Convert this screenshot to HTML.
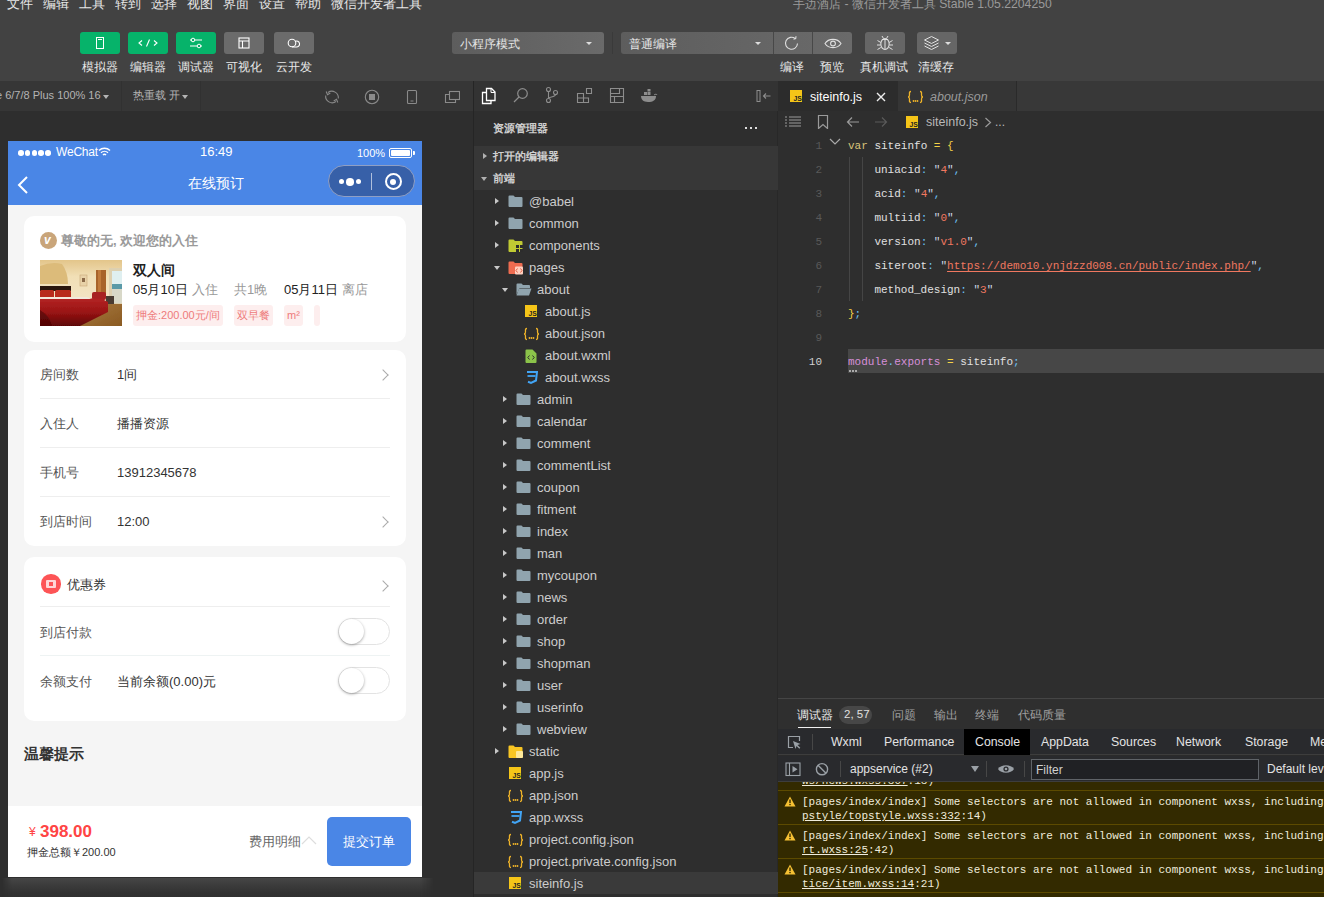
<!DOCTYPE html>
<html><head><meta charset="utf-8">
<style>
*{margin:0;padding:0;box-sizing:border-box}
html,body{width:1324px;height:897px;overflow:hidden;background:#2e2e2e;font-family:"Liberation Sans",sans-serif}
.a{position:absolute}
.t{position:absolute;white-space:nowrap;line-height:1}
/* top */
#top{left:0;top:0;width:1324px;height:81px;background:#424242}
.menu{top:-3px;font-size:13px;color:#e6e6e6}
.tbtn{top:32px;width:40px;height:22px;border-radius:3px;background:#06b36a}
.tbtn.g{background:#6b6b6b}
.tlab{top:61px;font-size:12px;color:#e8e8e8}
.dd{top:32px;height:22px;background:linear-gradient(90deg,#5d5d5d,#6a6a6a);border-radius:3px}
/* sub bar */
#sub{left:0;top:81px;width:473px;height:30px;background:#363636}
/* sim */
#sim{left:0;top:111px;width:473px;height:786px;background:#2e2e2e}
#phone{left:8px;top:141px;width:414px;height:736px;background:#f5f5f5;overflow:hidden;}
.card{position:absolute;left:16px;width:382px;background:#fff;border-radius:10px}
.lbl{font-size:13px;color:#555}
.val{font-size:13px;color:#333}
.sep{position:absolute;left:16px;width:350px;height:1px;background:#eee}
.chev{position:absolute;width:8px;height:8px;border-right:1.5px solid #aaa;border-top:1.5px solid #aaa;transform:rotate(45deg)}
.tog{position:absolute;left:314px;width:52px;height:27px;border-radius:14px;border:1px solid #e3e3e3;background:#fff}
.tog:after{content:"";position:absolute;left:0;top:0;width:25px;height:25px;border-radius:50%;background:#fff;box-shadow:0 1px 3px rgba(0,0,0,.35)}
/* tree */
#tree{left:473px;top:81px;width:305px;height:816px;background:#2e2e2e;border-left:1px solid #252525;border-right:1px solid #282828}
.row{position:absolute;left:0;width:304px;height:22px}
.row span{position:absolute;top:5px;font-size:13px;color:#cccccc;white-space:nowrap;line-height:14px}
/* editor */
#ed{left:778px;top:81px;width:546px;height:616px;background:#2e2e2e}
.code{position:absolute;font-family:"Liberation Mono",monospace;font-size:11px;white-space:pre;line-height:14px;color:#d4d4d4}
.ln{position:absolute;font-family:"Liberation Mono",monospace;font-size:11px;color:#6e6e6e;text-align:right;width:30px;line-height:14px}
/* debugger */
#dbg{left:778px;top:698px;width:546px;height:199px;background:#2b2b2b}
.mono{font-family:"Liberation Mono",monospace;font-size:11px;white-space:pre;color:#f0ecdc;line-height:14px;margin-top:1px}
</style></head>
<body>
<div id="top" class="a"><div class="t menu" style="left:7px">文件</div><div class="t menu" style="left:43px">编辑</div><div class="t menu" style="left:79px">工具</div><div class="t menu" style="left:115px">转到</div><div class="t menu" style="left:151px">选择</div><div class="t menu" style="left:187px">视图</div><div class="t menu" style="left:223px">界面</div><div class="t menu" style="left:259px">设置</div><div class="t menu" style="left:295px">帮助</div><div class="t menu" style="left:331px">微信开发者工具</div><div class="t" style="left:793px;top:-2px;font-size:12.2px;color:#9a9a9a">手边酒店 - 微信开发者工具 Stable 1.05.2204250</div><div class="a tbtn" style="left:80px"><svg width="40" height="22"><rect x="16.5" y="5.5" width="7" height="11" fill="none" stroke="#fff" stroke-width="1"/><line x1="18" y1="7.5" x2="22" y2="7.5" stroke="#fff"/></svg></div><div class="t tlab" style="left:82px">模拟器</div><div class="a tbtn" style="left:128px"><svg width="40" height="22"><path d="M14 8.5l-3 2.5 3 2.5M26 8.5l3 2.5-3 2.5M21.5 7.5l-3 7" fill="none" stroke="#fff" stroke-width="1.1"/></svg></div><div class="t tlab" style="left:130px">编辑器</div><div class="a tbtn" style="left:176px"><svg width="40" height="22"><path d="M14 8h12M14 14h12" stroke="#fff" stroke-width="1"/><circle cx="17" cy="8" r="1.8" fill="#06b36a" stroke="#fff"/><circle cx="23" cy="14" r="1.8" fill="#06b36a" stroke="#fff"/></svg></div><div class="t tlab" style="left:178px">调试器</div><div class="a tbtn g" style="left:224px"><svg width="40" height="22"><rect x="15" y="6" width="10" height="10" fill="none" stroke="#fff" stroke-width="1.1"/><path d="M15 9h10M18.5 9v7" stroke="#fff" stroke-width="1.1"/></svg></div><div class="t tlab" style="left:226px">可视化</div><div class="a tbtn g" style="left:274px"><svg width="40" height="22"><circle cx="18" cy="11" r="3.8" fill="none" stroke="#fff" stroke-width="1.1"/><path d="M21 9.5a3 3 0 1 1 1 5.5H18" fill="none" stroke="#fff" stroke-width="1.1"/></svg></div><div class="t tlab" style="left:276px">云开发</div><div class="a dd" style="left:452px;width:152px"><span class="t" style="left:8px;top:6px;font-size:12px;color:#e6e6e6">小程序模式</span><span class="a" style="left:134px;top:10px;border:3px solid transparent;border-top:3px solid #ddd;border-bottom:0"></span></div><div class="a" style="left:612px;top:32px;width:1px;height:22px;background:#3a3a3a"></div><div class="a dd" style="left:621px;width:231px"><span class="t" style="left:8px;top:6px;font-size:12px;color:#e6e6e6">普通编译</span><span class="a" style="left:134px;top:10px;border:3px solid transparent;border-top:3px solid #ddd;border-bottom:0"></span><div class="a" style="left:152px;top:0;width:1px;height:22px;background:#484848"></div><div class="a" style="left:191px;top:0;width:1px;height:22px;background:#484848"></div><svg class="a" style="left:162px;top:3px" width="18" height="16"><path d="M14.5 8.5A6 6 0 1 1 12.3 3.6" fill="none" stroke="#e0e0e0" stroke-width="1.1"/><path d="M10.5 4.2l2.2-0.6 0.3-2.4" fill="none" stroke="#e0e0e0" stroke-width="1.1"/></svg><svg class="a" style="left:203px;top:3px" width="18" height="16"><path d="M1 8.5C4.5 3 13.5 3 17 8.5C13.5 14 4.5 14 1 8.5Z" fill="none" stroke="#e0e0e0" stroke-width="1.1"/><circle cx="9" cy="8.5" r="2.4" fill="none" stroke="#e0e0e0" stroke-width="1.1"/></svg></div><div class="a dd" style="left:865px;width:40px;background:#666"><svg class="a" style="left:11px;top:3px" width="18" height="16"><ellipse cx="9" cy="9" rx="4.2" ry="5.5" fill="none" stroke="#e0e0e0" stroke-width="1.1"/><path d="M9 4v10M1.5 5.5l3.3 2M16.5 5.5l-3.3 2M1 10h3.5M17 10h-3.5M1.5 14.5l3.3-2M16.5 14.5l-3.3-2M6 1l1.5 2.5M12 1l-1.5 2.5M6 4.5h6" stroke="#e0e0e0" stroke-width="1"/></svg></div><div class="a dd" style="left:917px;width:40px;background:#666"><svg class="a" style="left:6px;top:3px" width="18" height="16"><path d="M8.5 1.5l7 3.5-7 3.5-7-3.5z" fill="none" stroke="#e0e0e0" stroke-width="1"/><path d="M1.5 8l7 3.5 7-3.5M1.5 11l7 3.5 7-3.5" fill="none" stroke="#e0e0e0" stroke-width="1"/></svg><span class="a" style="left:28px;top:10px;border:3px solid transparent;border-top:3px solid #ddd;border-bottom:0"></span></div><div class="t tlab" style="left:780px">编译</div><div class="t tlab" style="left:820px">预览</div><div class="t tlab" style="left:860px">真机调试</div><div class="t tlab" style="left:918px">清缓存</div></div>
<div id="sub" class="a"><div class="t" style="left:-4px;top:9px;font-size:11px;color:#b4b4b4">e 6/7/8 Plus 100% 16</div><span class="a" style="left:103px;top:14px;border:3.5px solid transparent;border-top:4px solid #b4b4b4;border-bottom:0"></span><div class="a" style="left:121px;top:0;width:1px;height:30px;background:#313131"></div><div class="t" style="left:133px;top:9px;font-size:11.3px;color:#b4b4b4">热重载 开</div><span class="a" style="left:182px;top:14px;border:3.5px solid transparent;border-top:4px solid #b4b4b4;border-bottom:0"></span><div class="a" style="left:200px;top:0;width:1px;height:30px;background:#313131"></div><svg class="a" style="left:324px;top:8px" width="16" height="16"><path d="M4 3.5A6.5 6.5 0 0 1 14.3 9.5M12 12.5A6.5 6.5 0 0 1 1.7 6.5" fill="none" stroke="#8a8a8a" stroke-width="1.1"/><path d="M2.2 2.5l1.3 3.2 2.8-1.6M13.8 13.5l-1.3-3.2-2.8 1.6" fill="none" stroke="#8a8a8a" stroke-width="1.1"/></svg><svg class="a" style="left:364px;top:8px" width="16" height="16"><circle cx="8" cy="8" r="6.7" fill="none" stroke="#8a8a8a" stroke-width="1.1"/><rect x="5" y="5" width="6" height="6" fill="#8a8a8a"/></svg><svg class="a" style="left:403px;top:7px" width="16" height="18"><rect x="4.5" y="2.5" width="9" height="13" rx="1" fill="none" stroke="#8a8a8a" stroke-width="1.1"/><line x1="7.5" y1="13" x2="10.5" y2="13" stroke="#8a8a8a"/></svg><svg class="a" style="left:444px;top:8px" width="16" height="16"><rect x="5.5" y="2.5" width="10" height="8" fill="none" stroke="#8a8a8a" stroke-width="1.1"/><path d="M5.5 5.5H1.5v8h10v-3" fill="none" stroke="#8a8a8a" stroke-width="1.1"/></svg></div><div id="sim" class="a"></div><div class="a" style="left:2px;top:878px;width:432px;height:19px;background:linear-gradient(180deg,#464646,#3c3c3c 35%,#333 75%,#303030);-webkit-mask-image:linear-gradient(90deg,transparent,#000 10px,#000 418px,transparent)"></div><div class="a" style="left:8px;top:877px;width:414px;height:1px;background:#2e2e2e"></div><div id="phone" class="a"><div class="a" style="left:0;top:0;width:414px;height:64px;background:#4a86e6"></div><div class="a" style="left:10.0px;top:9px;width:5.5px;height:5.5px;border-radius:50%;background:#fff"></div><div class="a" style="left:16.8px;top:9px;width:5.5px;height:5.5px;border-radius:50%;background:#fff"></div><div class="a" style="left:23.6px;top:9px;width:5.5px;height:5.5px;border-radius:50%;background:#fff"></div><div class="a" style="left:30.4px;top:9px;width:5.5px;height:5.5px;border-radius:50%;background:#fff"></div><div class="a" style="left:37.2px;top:9px;width:5.5px;height:5.5px;border-radius:50%;background:#fff"></div><div class="t" style="left:48px;top:5px;font-size:12px;color:#fff;letter-spacing:-.2px">WeChat</div><svg class="a" style="left:90px;top:6px" width="13" height="10"><path d="M1 3.5a8 8 0 0 1 11 0M3 5.8a5 5 0 0 1 7 0M5 8a2 2 0 0 1 3 0" fill="none" stroke="#fff" stroke-width="1.4"/></svg><div class="t" style="left:192px;top:4px;font-size:13px;color:#fff">16:49</div><div class="t" style="left:349px;top:7px;font-size:11px;color:#fff">100%</div><div class="a" style="left:381px;top:7px;width:23px;height:10px;border:1px solid #fff;border-radius:2px"><div class="a" style="left:1px;top:1px;width:19px;height:6px;background:#fff;border-radius:1px"></div></div><div class="a" style="left:405px;top:10px;width:2px;height:4px;background:#fff;border-radius:0 1px 1px 0"></div><svg class="a" style="left:8px;top:34px" width="14" height="20"><path d="M11 2L3 10l8 8" fill="none" stroke="#fff" stroke-width="2"/></svg><div class="t" style="left:180px;top:35px;font-size:14px;color:#fff">在线预订</div><div class="a" style="left:320px;top:24px;width:87px;height:32px;border-radius:16px;background:#3760a8;border:1px solid #8f9fc4"></div><div class="a" style="left:331px;top:38px;width:5px;height:5px;border-radius:50%;background:#fff"></div><div class="a" style="left:338px;top:37px;width:7.5px;height:7.5px;border-radius:50%;background:#fff"></div><div class="a" style="left:348px;top:38px;width:5px;height:5px;border-radius:50%;background:#fff"></div><div class="a" style="left:363px;top:32px;width:1px;height:17px;background:rgba(255,255,255,.6)"></div><div class="a" style="left:376.5px;top:32px;width:17px;height:17px;border-radius:50%;border:2px solid #fff"><div class="a" style="left:3.5px;top:3.5px;width:6px;height:6px;border-radius:50%;background:#fff"></div></div><div class="card" style="top:75px;height:126px"><div class="a" style="left:16px;top:16px;width:17px;height:17px;border-radius:50%;background:#c9a57a"><div class="t" style="left:4px;top:2px;font-size:12px;font-weight:bold;font-style:italic;color:#fff">v</div></div><div class="t" style="left:37px;top:18px;font-size:13px;font-weight:bold;color:#9a9a9a">尊敬的无, 欢迎您的入住</div><svg class="a" style="left:16px;top:44px" width="82" height="66" viewBox="0 0 82 66">
<defs><linearGradient id="wall" x1="0" y1="0" x2="0" y2="1"><stop offset="0" stop-color="#e3c58a"/><stop offset=".25" stop-color="#f1dfb6"/><stop offset=".6" stop-color="#f3e4c4"/><stop offset="1" stop-color="#e8cfa0"/></linearGradient>
<linearGradient id="bed" x1="0" y1="0" x2="0" y2="1"><stop offset="0" stop-color="#b42424"/><stop offset=".5" stop-color="#9a1414"/><stop offset="1" stop-color="#5e0606"/></linearGradient>
<linearGradient id="floor" x1="0" y1="0" x2="1" y2="1"><stop offset="0" stop-color="#a87a40"/><stop offset="1" stop-color="#8a5a22"/></linearGradient>
<filter id="bl"><feGaussianBlur stdDeviation=".45"/></filter></defs>
<g filter="url(#bl)">
<rect width="82" height="66" fill="url(#wall)"/>
<path d="M0 24V6Q12 1 22 4Q28 12 28 24z" fill="#dcbb7a"/>
<rect x="40" y="15" width="7" height="11" fill="#e8d2a8" stroke="#c8a878" stroke-width=".6"/>
<rect x="42" y="18" width="3" height="4" fill="#8a6a4a"/>
<rect x="56" y="10" width="10" height="27" fill="#a8642c"/>
<rect x="58" y="10" width="3" height="27" fill="#c07a3a"/>
<rect x="69" y="8" width="13" height="38" fill="#ddd0b0"/>
<rect x="72" y="11" width="10" height="15" fill="#dfeff0"/>
<rect x="72" y="24" width="10" height="5" fill="#5a9aa8"/>
<rect x="72" y="29" width="10" height="14" fill="#d8d8c8"/>
<rect x="0" y="26" width="31" height="5" fill="#2a140e"/>
<rect x="0" y="30" width="14" height="8" rx="1.5" fill="#b82c1c"/>
<rect x="15" y="30" width="16" height="8" rx="1.5" fill="#b82c1c"/>
<rect x="52" y="32" width="14" height="8" rx="2" fill="#a82020"/>
<rect x="66" y="36" width="8" height="10" fill="#4a3a30"/>
<path d="M38 66L66 44H82V66z" fill="url(#floor)"/>
<path d="M0 38H46L62 39L68 42V52L40 66H0z" fill="url(#bed)"/>
<path d="M0 37H47L52 39H0z" fill="#f2e8dc"/>
<path d="M0 50Q10 56 12 66H0z" fill="#4a0404" opacity=".6"/>
</g></svg><div class="t" style="left:109px;top:47px;font-size:14px;font-weight:bold;color:#222">双人间</div><div class="t" style="left:109px;top:67px;font-size:13px;color:#222">05月10日 <span style="color:#999">入住</span></div><div class="t" style="left:210px;top:67px;font-size:13px;color:#999">共1晚</div><div class="t" style="left:260px;top:67px;font-size:13px;color:#222">05月11日 <span style="color:#999">离店</span></div><div class="a" style="left:109px;top:89px;width:90px;height:21px;background:#fdeeee;border-radius:3px"><div class="t" style="left:3px;top:5px;font-size:11px;color:#ee7b7b">押金:200.00元/间</div></div><div class="a" style="left:210px;top:89px;width:39px;height:21px;background:#fdeeee;border-radius:3px"><div class="t" style="left:3px;top:5px;font-size:11px;color:#ee7b7b">双早餐</div></div><div class="a" style="left:260px;top:89px;width:19px;height:21px;background:#fdeeee;border-radius:3px"><div class="t" style="left:3px;top:5px;font-size:11px;color:#ee7b7b">m²</div></div><div class="a" style="left:290px;top:89px;width:6px;height:21px;background:#fdeeee;border-radius:3px"><div class="t" style="left:3px;top:5px;font-size:11px;color:#ee7b7b"></div></div></div><div class="card" style="top:209px;height:196px"><div class="t lbl" style="left:16px;top:18px">房间数</div><div class="t val" style="left:93px;top:18px">1间</div><div class="chev" style="left:355px;margin-top:1px;top:20px"></div><div class="sep" style="top:48px"></div><div class="t lbl" style="left:16px;top:67px">入住人</div><div class="t val" style="left:93px;top:67px">播播资源</div><div class="sep" style="top:97px"></div><div class="t lbl" style="left:16px;top:116px">手机号</div><div class="t val" style="left:93px;top:116px">13912345678</div><div class="sep" style="top:146px"></div><div class="t lbl" style="left:16px;top:165px">到店时间</div><div class="t val" style="left:93px;top:165px">12:00</div><div class="chev" style="left:355px;margin-top:1px;top:167px"></div></div><div class="card" style="top:416px;height:164px"><div class="a" style="left:17px;top:17px;width:19.5px;height:19.5px;border-radius:50%;background:#fd5456"><div class="a" style="left:4.5px;top:6px;width:10.5px;height:7.5px;background:#ffd6d6;border-radius:1px"></div><div class="a" style="left:7.5px;top:8px;width:4.5px;height:3.5px;background:#fd5456"></div></div><div class="t lbl" style="left:43px;top:21px;color:#333">优惠券</div><div class="chev" style="left:355px;margin-top:1px;top:24px"></div><div class="sep" style="top:49px"></div><div class="t lbl" style="left:16px;top:68.5px">到店付款</div><div class="tog" style="top:61px"></div><div class="sep" style="top:98px;background:#eef3f3"></div><div class="t lbl" style="left:16px;top:117.5px">余额支付</div><div class="t val" style="left:93px;top:117.5px">当前余额(0.00)元</div><div class="tog" style="top:110px"></div></div><div class="t" style="left:16px;top:605px;font-size:15px;font-weight:bold;color:#333">温馨提示</div><div class="a" style="left:0;top:665px;width:414px;height:71px;background:#fff"><div class="t" style="left:21px;top:20px;font-size:12px;color:#f44">¥</div><div class="t" style="left:32px;top:17px;font-size:17px;font-weight:bold;color:#f44">398.00</div><div class="t" style="left:19px;top:41px;font-size:11px;color:#333">押金总额￥200.00</div><div class="t" style="left:241px;top:29px;font-size:13px;color:#666">费用明细</div><svg class="a" style="left:293px;top:29px" width="16" height="10"><path d="M1 9l7-7 7 7" fill="none" stroke="#ddd" stroke-width="1.2"/></svg><div class="a" style="left:319px;top:11px;width:84px;height:49px;background:#4a86e6;border-radius:5px"><div class="t" style="left:16px;top:18px;font-size:13px;color:#fff">提交订单</div></div></div></div>
<div id="tree" class="a"><div class="a" style="left:0;top:0;width:304px;height:30px;background:#333"></div><svg class="a" style="left:6px;top:6px" width="18" height="18"><path d="M6.5 1.5h5l3.5 3.5v8.5h-8.5z" fill="none" stroke="#fff" stroke-width="1.3"/><path d="M11 1.5v4h4" fill="none" stroke="#fff" stroke-width="1"/><path d="M6.5 5.5h-4v11h8.5v-3" fill="none" stroke="#fff" stroke-width="1.3"/></svg><svg class="a" style="left:38px;top:6px" width="18" height="18"><circle cx="10.5" cy="6.5" r="4.8" fill="none" stroke="#8d8d8d" stroke-width="1.2"/><path d="M7 10L2 15" stroke="#8d8d8d" stroke-width="1.3"/></svg><svg class="a" style="left:70px;top:5px" width="16" height="18"><circle cx="4.5" cy="3.5" r="2" fill="none" stroke="#8d8d8d" stroke-width="1.1"/><circle cx="4.5" cy="14.5" r="2" fill="none" stroke="#8d8d8d" stroke-width="1.1"/><circle cx="11.5" cy="6.5" r="2" fill="none" stroke="#8d8d8d" stroke-width="1.1"/><path d="M4.5 5.5v7M11.5 8.5c0 3-7 2-7 4" fill="none" stroke="#8d8d8d" stroke-width="1.1"/></svg><svg class="a" style="left:102px;top:6px" width="18" height="18"><path d="M1.5 6.5h6v9h-6zM1.5 11h6M7.5 11h5v4.5h-5M10.5 1.5h5v5h-5z" fill="none" stroke="#8d8d8d" stroke-width="1.1"/></svg><svg class="a" style="left:135px;top:6px" width="17" height="18"><path d="M1.5 1.5h13v14h-13zM1.5 6.5h9v-5M1.5 9.5h13M5.5 15.5v-6" fill="none" stroke="#8d8d8d" stroke-width="1.1"/></svg><svg class="a" style="left:166px;top:8px" width="18" height="14"><path d="M1 7h15c0 4-3 6-8 6S1 10 1 7z" fill="#8d8d8d"/><rect x="4" y="3" width="3" height="3" fill="#8d8d8d"/><rect x="7.5" y="3" width="3" height="3" fill="#8d8d8d"/><rect x="7.5" y="0" width="3" height="2.5" fill="#8d8d8d"/><path d="M14 6c1-1 3-1 3 0" stroke="#8d8d8d" fill="none"/></svg><svg class="a" style="left:282px;top:8px" width="16" height="14"><rect x="1" y="1.5" width="3" height="11" fill="none" stroke="#8d8d8d" stroke-width="1"/><path d="M14.5 7H7.5M10 4.5L7.5 7 10 9.5" fill="none" stroke="#8d8d8d" stroke-width="1.1"/></svg><div class="t" style="left:19px;top:42px;font-size:11px;font-weight:bold;color:#cfcfcf">资源管理器</div><div class="a" style="left:271px;top:46px;width:2px;height:2px;background:#ddd;box-shadow:5px 0 #ddd,10px 0 #ddd"></div><div class="a" style="left:0;top:65px;width:304px;height:44px;background:#373737"></div><span class="a" style="left:9px;top:72px;border:3.5px solid transparent;border-left:4px solid #b0b0b0;border-right:0"></span><div class="t" style="left:19px;top:70px;font-size:11px;font-weight:bold;color:#d0d0d0">打开的编辑器</div><span class="a" style="left:7px;top:96px;border:3.5px solid transparent;border-top:4px solid #b0b0b0;border-bottom:0"></span><div class="t" style="left:19px;top:92px;font-size:11px;font-weight:bold;color:#d0d0d0">前端</div><div class="row" style="top:109px;"><span class="a" style="left:21px;top:8px;border:3.5px solid transparent;border-left:4px solid #c8c8c8;border-right:0"></span><div class="a" style="left:34px;top:5px;line-height:0"><svg width="15" height="12"><path d="M0.5 1.5a1 1 0 0 1 1-1h4l1.5 1.5h6.5a1 1 0 0 1 1 1V11a1 1 0 0 1-1 1h-12a1 1 0 0 1-1-1z" fill="#90a4ae"/></svg></div><span style="left:55px">@babel</span></div><div class="row" style="top:131px;"><span class="a" style="left:21px;top:8px;border:3.5px solid transparent;border-left:4px solid #c8c8c8;border-right:0"></span><div class="a" style="left:34px;top:5px;line-height:0"><svg width="15" height="12"><path d="M0.5 1.5a1 1 0 0 1 1-1h4l1.5 1.5h6.5a1 1 0 0 1 1 1V11a1 1 0 0 1-1 1h-12a1 1 0 0 1-1-1z" fill="#90a4ae"/></svg></div><span style="left:55px">common</span></div><div class="row" style="top:153px;"><span class="a" style="left:21px;top:8px;border:3.5px solid transparent;border-left:4px solid #c8c8c8;border-right:0"></span><div class="a" style="left:34px;top:5px;line-height:0"><svg width="16" height="14"><path d="M0.5 1.5a1 1 0 0 1 1-1h4l1.5 1.5h6.5a1 1 0 0 1 1 1V12a1 1 0 0 1-1 1h-12a1 1 0 0 1-1-1z" fill="#c0ca33"/><rect x="8" y="6" width="3" height="3" fill="#2c2c2c"/><rect x="12" y="6" width="3" height="3" fill="#2c2c2c"/><rect x="8" y="10" width="3" height="3" fill="#2c2c2c"/><rect x="12" y="10" width="3" height="3" fill="#2c2c2c"/></svg></div><span style="left:55px">components</span></div><div class="row" style="top:175px;"><span class="a" style="left:20px;top:10px;border:3.5px solid transparent;border-top:4px solid #c8c8c8;border-bottom:0"></span><div class="a" style="left:34px;top:5px;line-height:0"><svg width="16" height="14"><path d="M0.5 1.5a1 1 0 0 1 1-1h4l1.5 1.5h6.5a1 1 0 0 1 1 1V12a1 1 0 0 1-1 1h-12a1 1 0 0 1-1-1z" fill="#ef6c50"/><rect x="7" y="5.5" width="8" height="8" rx="1" fill="#ffd0c0"/><path d="M9.5 7.5l-1.5 2 1.5 2M12.5 7.5l1.5 2-1.5 2" stroke="#e05030" fill="none" stroke-width=".9"/></svg></div><span style="left:55px">pages</span></div><div class="row" style="top:197px;"><span class="a" style="left:28px;top:10px;border:3.5px solid transparent;border-top:4px solid #c8c8c8;border-bottom:0"></span><div class="a" style="left:42px;top:5px;line-height:0"><svg width="16" height="13"><path d="M0.5 1.5a1 1 0 0 1 1-1h4l1.5 1.5h6a1 1 0 0 1 1 1V5H3.5L0.5 12z" fill="#90a4ae"/><path d="M3 5.5h12.5L13 12.5H0.5z" fill="#90a4ae"/></svg></div><span style="left:63px">about</span></div><div class="row" style="top:219px;"><div class="a" style="left:51px;top:5px;line-height:0"><svg width="12" height="12"><rect width="12" height="12" fill="#f5c518"/><text x="3.6" y="10.6" font-family="Liberation Sans" font-size="6.8" font-weight="bold" fill="#222">JS</text></svg></div><span style="left:71px">about.js</span></div><div class="row" style="top:241px;"><div class="a" style="left:49px;top:5px;line-height:0"><svg width="17" height="14"><path d="M4 1.5C2 1.5 2.5 3 2.5 5S1 7 1 7s1.5 0 1.5 2-.5 3.5 1.5 3.5M13 1.5c2 0 1.5 1.5 1.5 3.5s1.5 2 1.5 2-1.5 0-1.5 2 .5 3.5-1.5 3.5" fill="none" stroke="#f0b429" stroke-width="1.3"/><circle cx="6.5" cy="11" r=".9" fill="#f0b429"/><circle cx="8.5" cy="11" r=".9" fill="#f0b429"/><circle cx="10.5" cy="11" r=".9" fill="#f0b429"/></svg></div><span style="left:71px">about.json</span></div><div class="row" style="top:263px;"><div class="a" style="left:51px;top:5px;line-height:0"><svg width="12" height="14"><path d="M0.5 1.5a1 1 0 0 1 1-1h6l4 4v8.5a1 1 0 0 1-1 1h-9a1 1 0 0 1-1-1z" fill="#8bc34a"/><path d="M4.5 6.5L2.8 8.5l1.7 2M7.5 6.5l1.7 2-1.7 2" fill="none" stroke="#2c2c2c" stroke-width="1"/></svg></div><span style="left:71px">about.wxml</span></div><div class="row" style="top:285px;"><div class="a" style="left:51px;top:5px;line-height:0"><svg width="13" height="14"><path d="M2 1h10l-1 8.5-5 2.5-3-1.2" fill="none" stroke="#42a5f5" stroke-width="2"/><path d="M2.5 5h8" stroke="#42a5f5" stroke-width="1.8"/></svg></div><span style="left:71px">about.wxss</span></div><div class="row" style="top:307px;"><span class="a" style="left:29px;top:8px;border:3.5px solid transparent;border-left:4px solid #c8c8c8;border-right:0"></span><div class="a" style="left:42px;top:5px;line-height:0"><svg width="15" height="12"><path d="M0.5 1.5a1 1 0 0 1 1-1h4l1.5 1.5h6.5a1 1 0 0 1 1 1V11a1 1 0 0 1-1 1h-12a1 1 0 0 1-1-1z" fill="#90a4ae"/></svg></div><span style="left:63px">admin</span></div><div class="row" style="top:329px;"><span class="a" style="left:29px;top:8px;border:3.5px solid transparent;border-left:4px solid #c8c8c8;border-right:0"></span><div class="a" style="left:42px;top:5px;line-height:0"><svg width="15" height="12"><path d="M0.5 1.5a1 1 0 0 1 1-1h4l1.5 1.5h6.5a1 1 0 0 1 1 1V11a1 1 0 0 1-1 1h-12a1 1 0 0 1-1-1z" fill="#90a4ae"/></svg></div><span style="left:63px">calendar</span></div><div class="row" style="top:351px;"><span class="a" style="left:29px;top:8px;border:3.5px solid transparent;border-left:4px solid #c8c8c8;border-right:0"></span><div class="a" style="left:42px;top:5px;line-height:0"><svg width="15" height="12"><path d="M0.5 1.5a1 1 0 0 1 1-1h4l1.5 1.5h6.5a1 1 0 0 1 1 1V11a1 1 0 0 1-1 1h-12a1 1 0 0 1-1-1z" fill="#90a4ae"/></svg></div><span style="left:63px">comment</span></div><div class="row" style="top:373px;"><span class="a" style="left:29px;top:8px;border:3.5px solid transparent;border-left:4px solid #c8c8c8;border-right:0"></span><div class="a" style="left:42px;top:5px;line-height:0"><svg width="15" height="12"><path d="M0.5 1.5a1 1 0 0 1 1-1h4l1.5 1.5h6.5a1 1 0 0 1 1 1V11a1 1 0 0 1-1 1h-12a1 1 0 0 1-1-1z" fill="#90a4ae"/></svg></div><span style="left:63px">commentList</span></div><div class="row" style="top:395px;"><span class="a" style="left:29px;top:8px;border:3.5px solid transparent;border-left:4px solid #c8c8c8;border-right:0"></span><div class="a" style="left:42px;top:5px;line-height:0"><svg width="15" height="12"><path d="M0.5 1.5a1 1 0 0 1 1-1h4l1.5 1.5h6.5a1 1 0 0 1 1 1V11a1 1 0 0 1-1 1h-12a1 1 0 0 1-1-1z" fill="#90a4ae"/></svg></div><span style="left:63px">coupon</span></div><div class="row" style="top:417px;"><span class="a" style="left:29px;top:8px;border:3.5px solid transparent;border-left:4px solid #c8c8c8;border-right:0"></span><div class="a" style="left:42px;top:5px;line-height:0"><svg width="15" height="12"><path d="M0.5 1.5a1 1 0 0 1 1-1h4l1.5 1.5h6.5a1 1 0 0 1 1 1V11a1 1 0 0 1-1 1h-12a1 1 0 0 1-1-1z" fill="#90a4ae"/></svg></div><span style="left:63px">fitment</span></div><div class="row" style="top:439px;"><span class="a" style="left:29px;top:8px;border:3.5px solid transparent;border-left:4px solid #c8c8c8;border-right:0"></span><div class="a" style="left:42px;top:5px;line-height:0"><svg width="15" height="12"><path d="M0.5 1.5a1 1 0 0 1 1-1h4l1.5 1.5h6.5a1 1 0 0 1 1 1V11a1 1 0 0 1-1 1h-12a1 1 0 0 1-1-1z" fill="#90a4ae"/></svg></div><span style="left:63px">index</span></div><div class="row" style="top:461px;"><span class="a" style="left:29px;top:8px;border:3.5px solid transparent;border-left:4px solid #c8c8c8;border-right:0"></span><div class="a" style="left:42px;top:5px;line-height:0"><svg width="15" height="12"><path d="M0.5 1.5a1 1 0 0 1 1-1h4l1.5 1.5h6.5a1 1 0 0 1 1 1V11a1 1 0 0 1-1 1h-12a1 1 0 0 1-1-1z" fill="#90a4ae"/></svg></div><span style="left:63px">man</span></div><div class="row" style="top:483px;"><span class="a" style="left:29px;top:8px;border:3.5px solid transparent;border-left:4px solid #c8c8c8;border-right:0"></span><div class="a" style="left:42px;top:5px;line-height:0"><svg width="15" height="12"><path d="M0.5 1.5a1 1 0 0 1 1-1h4l1.5 1.5h6.5a1 1 0 0 1 1 1V11a1 1 0 0 1-1 1h-12a1 1 0 0 1-1-1z" fill="#90a4ae"/></svg></div><span style="left:63px">mycoupon</span></div><div class="row" style="top:505px;"><span class="a" style="left:29px;top:8px;border:3.5px solid transparent;border-left:4px solid #c8c8c8;border-right:0"></span><div class="a" style="left:42px;top:5px;line-height:0"><svg width="15" height="12"><path d="M0.5 1.5a1 1 0 0 1 1-1h4l1.5 1.5h6.5a1 1 0 0 1 1 1V11a1 1 0 0 1-1 1h-12a1 1 0 0 1-1-1z" fill="#90a4ae"/></svg></div><span style="left:63px">news</span></div><div class="row" style="top:527px;"><span class="a" style="left:29px;top:8px;border:3.5px solid transparent;border-left:4px solid #c8c8c8;border-right:0"></span><div class="a" style="left:42px;top:5px;line-height:0"><svg width="15" height="12"><path d="M0.5 1.5a1 1 0 0 1 1-1h4l1.5 1.5h6.5a1 1 0 0 1 1 1V11a1 1 0 0 1-1 1h-12a1 1 0 0 1-1-1z" fill="#90a4ae"/></svg></div><span style="left:63px">order</span></div><div class="row" style="top:549px;"><span class="a" style="left:29px;top:8px;border:3.5px solid transparent;border-left:4px solid #c8c8c8;border-right:0"></span><div class="a" style="left:42px;top:5px;line-height:0"><svg width="15" height="12"><path d="M0.5 1.5a1 1 0 0 1 1-1h4l1.5 1.5h6.5a1 1 0 0 1 1 1V11a1 1 0 0 1-1 1h-12a1 1 0 0 1-1-1z" fill="#90a4ae"/></svg></div><span style="left:63px">shop</span></div><div class="row" style="top:571px;"><span class="a" style="left:29px;top:8px;border:3.5px solid transparent;border-left:4px solid #c8c8c8;border-right:0"></span><div class="a" style="left:42px;top:5px;line-height:0"><svg width="15" height="12"><path d="M0.5 1.5a1 1 0 0 1 1-1h4l1.5 1.5h6.5a1 1 0 0 1 1 1V11a1 1 0 0 1-1 1h-12a1 1 0 0 1-1-1z" fill="#90a4ae"/></svg></div><span style="left:63px">shopman</span></div><div class="row" style="top:593px;"><span class="a" style="left:29px;top:8px;border:3.5px solid transparent;border-left:4px solid #c8c8c8;border-right:0"></span><div class="a" style="left:42px;top:5px;line-height:0"><svg width="15" height="12"><path d="M0.5 1.5a1 1 0 0 1 1-1h4l1.5 1.5h6.5a1 1 0 0 1 1 1V11a1 1 0 0 1-1 1h-12a1 1 0 0 1-1-1z" fill="#90a4ae"/></svg></div><span style="left:63px">user</span></div><div class="row" style="top:615px;"><span class="a" style="left:29px;top:8px;border:3.5px solid transparent;border-left:4px solid #c8c8c8;border-right:0"></span><div class="a" style="left:42px;top:5px;line-height:0"><svg width="15" height="12"><path d="M0.5 1.5a1 1 0 0 1 1-1h4l1.5 1.5h6.5a1 1 0 0 1 1 1V11a1 1 0 0 1-1 1h-12a1 1 0 0 1-1-1z" fill="#90a4ae"/></svg></div><span style="left:63px">userinfo</span></div><div class="row" style="top:637px;"><span class="a" style="left:29px;top:8px;border:3.5px solid transparent;border-left:4px solid #c8c8c8;border-right:0"></span><div class="a" style="left:42px;top:5px;line-height:0"><svg width="15" height="12"><path d="M0.5 1.5a1 1 0 0 1 1-1h4l1.5 1.5h6.5a1 1 0 0 1 1 1V11a1 1 0 0 1-1 1h-12a1 1 0 0 1-1-1z" fill="#90a4ae"/></svg></div><span style="left:63px">webview</span></div><div class="row" style="top:659px;"><span class="a" style="left:21px;top:8px;border:3.5px solid transparent;border-left:4px solid #c8c8c8;border-right:0"></span><div class="a" style="left:34px;top:5px;line-height:0"><svg width="16" height="14"><path d="M0.5 1.5a1 1 0 0 1 1-1h4l1.5 1.5h6.5a1 1 0 0 1 1 1V12a1 1 0 0 1-1 1h-12a1 1 0 0 1-1-1z" fill="#f9c623"/><rect x="8" y="6" width="7" height="7" rx="1" fill="#fde89a"/></svg></div><span style="left:55px">static</span></div><div class="row" style="top:681px;"><div class="a" style="left:35px;top:5px;line-height:0"><svg width="12" height="12"><rect width="12" height="12" fill="#f5c518"/><text x="3.6" y="10.6" font-family="Liberation Sans" font-size="6.8" font-weight="bold" fill="#222">JS</text></svg></div><span style="left:55px">app.js</span></div><div class="row" style="top:703px;"><div class="a" style="left:33px;top:5px;line-height:0"><svg width="17" height="14"><path d="M4 1.5C2 1.5 2.5 3 2.5 5S1 7 1 7s1.5 0 1.5 2-.5 3.5 1.5 3.5M13 1.5c2 0 1.5 1.5 1.5 3.5s1.5 2 1.5 2-1.5 0-1.5 2 .5 3.5-1.5 3.5" fill="none" stroke="#f0b429" stroke-width="1.3"/><circle cx="6.5" cy="11" r=".9" fill="#f0b429"/><circle cx="8.5" cy="11" r=".9" fill="#f0b429"/><circle cx="10.5" cy="11" r=".9" fill="#f0b429"/></svg></div><span style="left:55px">app.json</span></div><div class="row" style="top:725px;"><div class="a" style="left:35px;top:5px;line-height:0"><svg width="13" height="14"><path d="M2 1h10l-1 8.5-5 2.5-3-1.2" fill="none" stroke="#42a5f5" stroke-width="2"/><path d="M2.5 5h8" stroke="#42a5f5" stroke-width="1.8"/></svg></div><span style="left:55px">app.wxss</span></div><div class="row" style="top:747px;"><div class="a" style="left:33px;top:5px;line-height:0"><svg width="17" height="14"><path d="M4 1.5C2 1.5 2.5 3 2.5 5S1 7 1 7s1.5 0 1.5 2-.5 3.5 1.5 3.5M13 1.5c2 0 1.5 1.5 1.5 3.5s1.5 2 1.5 2-1.5 0-1.5 2 .5 3.5-1.5 3.5" fill="none" stroke="#f0b429" stroke-width="1.3"/><circle cx="6.5" cy="11" r=".9" fill="#f0b429"/><circle cx="8.5" cy="11" r=".9" fill="#f0b429"/><circle cx="10.5" cy="11" r=".9" fill="#f0b429"/></svg></div><span style="left:55px">project.config.json</span></div><div class="row" style="top:769px;"><div class="a" style="left:33px;top:5px;line-height:0"><svg width="17" height="14"><path d="M4 1.5C2 1.5 2.5 3 2.5 5S1 7 1 7s1.5 0 1.5 2-.5 3.5 1.5 3.5M13 1.5c2 0 1.5 1.5 1.5 3.5s1.5 2 1.5 2-1.5 0-1.5 2 .5 3.5-1.5 3.5" fill="none" stroke="#f0b429" stroke-width="1.3"/><circle cx="6.5" cy="11" r=".9" fill="#f0b429"/><circle cx="8.5" cy="11" r=".9" fill="#f0b429"/><circle cx="10.5" cy="11" r=".9" fill="#f0b429"/></svg></div><span style="left:55px">project.private.config.json</span></div><div class="row" style="top:791px;background:#3a3a3a;"><div class="a" style="left:35px;top:5px;line-height:0"><svg width="12" height="12"><rect width="12" height="12" fill="#f5c518"/><text x="3.6" y="10.6" font-family="Liberation Sans" font-size="6.8" font-weight="bold" fill="#222">JS</text></svg></div><span style="left:55px">siteinfo.js</span></div></div>
<div id="ed" class="a"><div class="a" style="left:0;top:0;width:546px;height:30px;background:#383838"></div><div class="a" style="left:0;top:0;width:120px;height:30px;background:#2c2c2c"></div><div class="a" style="left:120px;top:0;width:119px;height:30px;background:#353535;border-right:1px solid #2a2a2a"></div><div class="a" style="left:12px;top:9px;line-height:0"><svg width="12" height="12"><rect width="12" height="12" fill="#f5c518"/><text x="3.6" y="10.6" font-family="Liberation Sans" font-size="6.8" font-weight="bold" fill="#222">JS</text></svg></div><div class="t" style="left:32px;top:10px;font-size:12.5px;color:#fff">siteinfo.js</div><svg class="a" style="left:98px;top:11px" width="10" height="10"><path d="M1 1l8 8M9 1L1 9" stroke="#eee" stroke-width="1.4"/></svg><svg class="a" style="left:129px;top:9px" width="17" height="14"><path d="M4 1.5C2 1.5 2.5 3 2.5 5S1 7 1 7s1.5 0 1.5 2-.5 3.5 1.5 3.5M13 1.5c2 0 1.5 1.5 1.5 3.5s1.5 2 1.5 2-1.5 0-1.5 2 .5 3.5-1.5 3.5" fill="none" stroke="#f0b429" stroke-width="1.3"/><circle cx="6.5" cy="11" r=".9" fill="#f0b429"/><circle cx="8.5" cy="11" r=".9" fill="#f0b429"/><circle cx="10.5" cy="11" r=".9" fill="#f0b429"/></svg><div class="t" style="left:152px;top:10px;font-size:12.5px;font-style:italic;color:#9a9a9a">about.json</div><svg class="a" style="left:7px;top:35px" width="16" height="12"><path d="M0 1h2M0 4h2M0 7h2M0 10h2M4 1h12M4 4h12M4 7h12M4 10h12" stroke="#9a9a9a" stroke-width="1"/></svg><svg class="a" style="left:39px;top:34px" width="12" height="14"><path d="M1.5 0.5h9v13l-4.5-4-4.5 4z" fill="none" stroke="#9a9a9a" stroke-width="1.2"/></svg><svg class="a" style="left:68px;top:35px" width="14" height="12"><path d="M13 6H1.5M6 1.5L1.5 6 6 10.5" fill="none" stroke="#9a9a9a" stroke-width="1.2"/></svg><svg class="a" style="left:96px;top:35px" width="14" height="12"><path d="M1 6h11.5M8 1.5L12.5 6 8 10.5" fill="none" stroke="#5a5a5a" stroke-width="1.2"/></svg><div class="a" style="left:128px;top:35px;line-height:0"><svg width="12" height="12"><rect width="12" height="12" fill="#f5c518"/><text x="3.6" y="10.6" font-family="Liberation Sans" font-size="6.8" font-weight="bold" fill="#222">JS</text></svg></div><div class="t" style="left:148px;top:35px;font-size:12.5px;color:#b8b8b8">siteinfo.js</div><svg class="a" style="left:206px;top:36px" width="8" height="11"><path d="M1.5 1l5 4.5-5 4.5" fill="none" stroke="#9a9a9a" stroke-width="1.2"/></svg><div class="t" style="left:217px;top:35px;font-size:12px;color:#b8b8b8">...</div><div class="a" style="left:70px;top:268px;width:476px;height:24px;background:#474747"></div><div class="a" style="left:71px;top:76px;width:1px;height:144px;background:#454545"></div><div class="a" style="left:84px;top:76px;width:1px;height:144px;background:#454545"></div><div class="ln" style="left:14px;top:58px;color:#595959">1</div><div class="code" style="left:70px;top:58px"><span style="color:#d8c47a">var</span> <span style="color:#e0e0e0">siteinfo</span> <span style="color:#f5d247">=</span> <span style="color:#f5d247">{</span></div><div class="ln" style="left:14px;top:82px;color:#595959">2</div><div class="code" style="left:70px;top:82px">    <span style="color:#e0e0e0">uniacid</span><span style="color:#6fc3f5">:</span> <span style="color:#cfd8e3">"</span><span style="color:#f07860">4</span><span style="color:#cfd8e3">"</span><span style="color:#6fc3f5">,</span></div><div class="ln" style="left:14px;top:106px;color:#595959">3</div><div class="code" style="left:70px;top:106px">    <span style="color:#e0e0e0">acid</span><span style="color:#6fc3f5">:</span> <span style="color:#cfd8e3">"</span><span style="color:#f07860">4</span><span style="color:#cfd8e3">"</span><span style="color:#6fc3f5">,</span></div><div class="ln" style="left:14px;top:130px;color:#595959">4</div><div class="code" style="left:70px;top:130px">    <span style="color:#e0e0e0">multiid</span><span style="color:#6fc3f5">:</span> <span style="color:#cfd8e3">"</span><span style="color:#f07860">0</span><span style="color:#cfd8e3">"</span><span style="color:#6fc3f5">,</span></div><div class="ln" style="left:14px;top:154px;color:#595959">5</div><div class="code" style="left:70px;top:154px">    <span style="color:#e0e0e0">version</span><span style="color:#6fc3f5">:</span> <span style="color:#cfd8e3">"</span><span style="color:#f07860">v1.0</span><span style="color:#cfd8e3">"</span><span style="color:#6fc3f5">,</span></div><div class="ln" style="left:14px;top:178px;color:#595959">6</div><div class="code" style="left:70px;top:178px">    <span style="color:#e0e0e0">siteroot</span><span style="color:#6fc3f5">:</span> <span style="color:#cfd8e3">"</span><span style="color:#f07860;text-decoration:underline;text-underline-offset:2px">https://demo10.ynjdzzd008.cn/public/index.php/</span><span style="color:#cfd8e3">"</span><span style="color:#6fc3f5">,</span></div><div class="ln" style="left:14px;top:202px;color:#595959">7</div><div class="code" style="left:70px;top:202px">    <span style="color:#e0e0e0">method_design</span><span style="color:#6fc3f5">:</span> <span style="color:#cfd8e3">"</span><span style="color:#f07860">3</span><span style="color:#cfd8e3">"</span></div><div class="ln" style="left:14px;top:226px;color:#595959">8</div><div class="code" style="left:70px;top:226px"><span style="color:#f5d247">}</span><span style="color:#6fc3f5">;</span></div><div class="ln" style="left:14px;top:250px;color:#595959">9</div><div class="code" style="left:70px;top:250px"></div><div class="ln" style="left:14px;top:274px;color:#d0d0d0">10</div><div class="code" style="left:70px;top:274px"><span style="color:#d68fd8">module</span><span style="color:#6fc3f5">.</span><span style="color:#d68fd8">exports</span> <span style="color:#f5d247">=</span> <span style="color:#e0e0e0">siteinfo</span><span style="color:#6fc3f5">;</span></div><svg class="a" style="left:51px;top:57px" width="12" height="7"><path d="M1 1l5 5 5-5" fill="none" stroke="#aaa" stroke-width="1.2"/></svg><div class="a" style="left:71px;top:289px;width:2px;height:2px;background:#aaa;box-shadow:3px 0 #aaa,6px 0 #aaa"></div></div>
<div id="dbg" class="a"><div class="a" style="left:0;top:0;width:546px;height:1px;background:#454545"></div><div class="a" style="left:0;top:1px;width:546px;height:30px;background:#2f2f2f"></div><div class="t" style="left:19px;top:11px;font-size:12px;color:#e8e8e8">调试器</div><div class="a" style="left:20px;top:29px;width:33px;height:1px;background:#f0f0f0"></div><div class="a" style="left:61px;top:8px;width:33px;height:18px;border-radius:9px;background:#474747"><div class="t" style="left:5px;top:3px;font-size:11.5px;color:#e0e0e0">2, 57</div></div><div class="t" style="left:114px;top:11px;font-size:12px;color:#a0a0a0">问题</div><div class="t" style="left:156px;top:11px;font-size:12px;color:#a0a0a0">输出</div><div class="t" style="left:197px;top:11px;font-size:12px;color:#a0a0a0">终端</div><div class="t" style="left:240px;top:11px;font-size:12px;color:#a0a0a0">代码质量</div><div class="a" style="left:0;top:31px;width:546px;height:26px;background:#292a2d;border-bottom:1px solid #3d3d3d"></div><svg class="a" style="left:9px;top:37px" width="15" height="15"><path d="M6 12.5H1.5v-11h11V6" fill="none" stroke="#9aa0a6" stroke-width="1.2"/><path d="M6 6l7.5 3-3 1 2.8 2.8-1 1L9.5 11l-1 3z" fill="#9aa0a6"/></svg><div class="a" style="left:34px;top:36px;width:1px;height:16px;background:#474747"></div><div class="a" style="left:186px;top:31px;width:66px;height:26px;background:#000"></div><div class="t" style="left:53px;top:38px;font-size:12.3px;color:#e3e3e3">Wxml</div><div class="t" style="left:106px;top:38px;font-size:12.3px;color:#e3e3e3">Performance</div><div class="t" style="left:197px;top:38px;font-size:12.3px;color:#e3e3e3">Console</div><div class="t" style="left:263px;top:38px;font-size:12.3px;color:#e3e3e3">AppData</div><div class="t" style="left:333px;top:38px;font-size:12.3px;color:#e3e3e3">Sources</div><div class="t" style="left:398px;top:38px;font-size:12.3px;color:#e3e3e3">Network</div><div class="t" style="left:467px;top:38px;font-size:12.3px;color:#e3e3e3">Storage</div><div class="t" style="left:532px;top:38px;font-size:12.3px;color:#e3e3e3">Memory</div><div class="a" style="left:0;top:58px;width:546px;height:26px;background:#292a2d;border-bottom:1px solid #3d3d3d"></div><svg class="a" style="left:7px;top:64px" width="16" height="15"><rect x="1" y="1" width="14" height="12.5" fill="none" stroke="#9aa0a6" stroke-width="1.1"/><path d="M4.5 1v12.5" stroke="#9aa0a6" stroke-width="1.1"/><path d="M7.5 4l5 3.2-5 3.2z" fill="#9aa0a6"/></svg><svg class="a" style="left:37px;top:64px" width="15" height="15"><circle cx="7" cy="7.2" r="5.6" fill="none" stroke="#9aa0a6" stroke-width="1.4"/><path d="M3 3.2l8 8" stroke="#9aa0a6" stroke-width="1.4"/></svg><div class="a" style="left:62px;top:63px;width:1px;height:16px;background:#474747"></div><div class="t" style="left:72px;top:65px;font-size:12px;color:#e3e3e3">appservice (#2)</div><span class="a" style="left:193px;top:68px;border:4px solid transparent;border-top:6px solid #9aa0a6;border-bottom:0"></span><div class="a" style="left:208px;top:63px;width:1px;height:16px;background:#474747"></div><svg class="a" style="left:219px;top:65px" width="18" height="12"><path d="M1 6C4 1 14 1 17 6C14 11 4 11 1 6z" fill="#9aa0a6"/><circle cx="9" cy="6" r="2.6" fill="#292a2d"/><circle cx="9" cy="6" r="1.3" fill="#9aa0a6"/></svg><div class="a" style="left:246px;top:63px;width:1px;height:16px;background:#474747"></div><div class="a" style="left:253px;top:61px;width:228px;height:21px;background:#202124;border:1px solid #5f6368"><div class="t" style="left:4px;top:4px;font-size:12px;color:#d0d0d0">Filter</div></div><div class="t" style="left:489px;top:65px;font-size:12px;color:#e3e3e3">Default levels</div><div class="a" style="left:0;top:84px;width:546px;height:115px;background:#332a00;overflow:hidden"><div class="mono a" style="left:24px;top:-9px;text-decoration:underline">ws/news.wxss:307</div><div class="mono a" style="left:129.6px;top:-9px">:13)</div><div class="a" style="left:0;top:8px;width:546px;height:1px;background:#5c4a00"></div><div class="a" style="left:0;top:42px;width:546px;height:1px;background:#5c4a00"></div><div class="a" style="left:0;top:76px;width:546px;height:1px;background:#5c4a00"></div><div class="a" style="left:0;top:110px;width:546px;height:1px;background:#5c4a00"></div><svg class="a" style="left:6px;top:14px" width="12" height="11"><path d="M6 0.5L11.5 10.5H0.5z" fill="#f5c033"/><path d="M6 3.5v3.5" stroke="#332a00" stroke-width="1.4"/><circle cx="6" cy="8.6" r=".8" fill="#332a00"/></svg><div class="mono a" style="left:24px;top:12px">[pages/index/index] Some selectors are not allowed in component wxss, including tag name selectors</div><div class="mono a" style="left:24px;top:26px"><span style="text-decoration:underline">pstyle/topstyle.wxss:332</span>:14)</div><svg class="a" style="left:6px;top:48px" width="12" height="11"><path d="M6 0.5L11.5 10.5H0.5z" fill="#f5c033"/><path d="M6 3.5v3.5" stroke="#332a00" stroke-width="1.4"/><circle cx="6" cy="8.6" r=".8" fill="#332a00"/></svg><div class="mono a" style="left:24px;top:46px">[pages/index/index] Some selectors are not allowed in component wxss, including tag name selectors</div><div class="mono a" style="left:24px;top:60px"><span style="text-decoration:underline">rt.wxss:25</span>:42)</div><svg class="a" style="left:6px;top:82px" width="12" height="11"><path d="M6 0.5L11.5 10.5H0.5z" fill="#f5c033"/><path d="M6 3.5v3.5" stroke="#332a00" stroke-width="1.4"/><circle cx="6" cy="8.6" r=".8" fill="#332a00"/></svg><div class="mono a" style="left:24px;top:80px">[pages/index/index] Some selectors are not allowed in component wxss, including tag name selectors</div><div class="mono a" style="left:24px;top:94px"><span style="text-decoration:underline">tice/item.wxss:14</span>:21)</div></div></div>
</body></html>
